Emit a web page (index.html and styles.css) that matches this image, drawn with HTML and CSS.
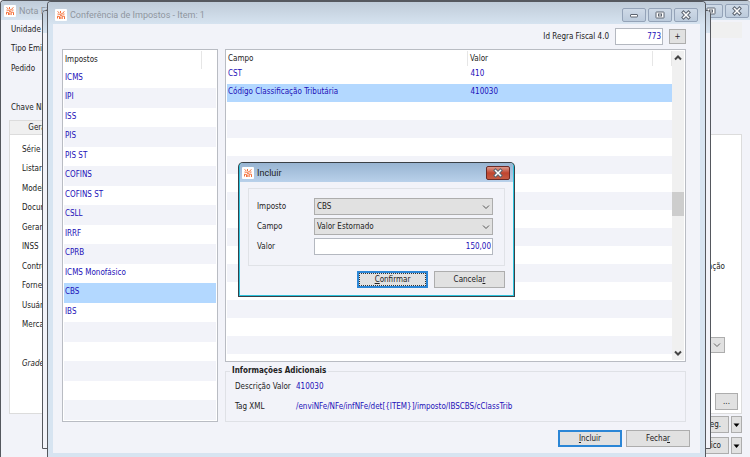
FILE: index.html
```
<!DOCTYPE html>
<html lang="pt-BR">
<head>
    <meta charset="UTF-8">
    <title>Conferência de Impostos</title>
    <link rel="stylesheet" href="styles.css">
</head>
<body>
    <!-- shared icons -->
    <svg class="sprite" width="0" height="0">
        <symbol id="logo" viewBox="0 0 12 12">
            <rect width="12" height="12" rx="1" fill="#fff"/>
            <path d="M2.5 2.5l2 1.5M5.5 2v2M9.5 2.5l-2 1.5M2.5 5l2 .3M7.5 5.2l2-.2M2.5 9.5V7.2l2 .3V10M4.5 5.5l3-1M5.8 10V7.5M7.2 10V7l2.3.3V10M5 6.3h2" fill="none" stroke="#f4703a" stroke-width="1"/>
        </symbol>
        <symbol id="min" viewBox="0 0 10 10">
            <rect x="1.5" y="4.5" width="7" height="2.5" rx=".5" fill="#fff" stroke="#5c6470"/>
        </symbol>
        <symbol id="max" viewBox="0 0 10 10">
            <rect x="1" y="2" width="8" height="6" rx=".5" fill="#fff" stroke="#5c6470"/>
            <rect x="3.5" y="4" width="3" height="2" fill="#fff" stroke="#5c6470"/>
        </symbol>
        <symbol id="close" viewBox="0 0 10 10">
            <path d="M2.5 2.5l5 5M7.5 2.5l-5 5" stroke="#5c6470" stroke-width="3.4" stroke-linecap="square"/>
            <path d="M2.5 2.5l5 5M7.5 2.5l-5 5" stroke="#fff" stroke-width="1.5" stroke-linecap="square"/>
        </symbol>
        <symbol id="chevron" viewBox="0 0 8 8">
            <path d="M1 2.5l3 3 3-3" fill="none" stroke="currentColor"/>
        </symbol>
        <symbol id="caret" viewBox="0 0 8 8">
            <path d="M1 2.5h6L4 6z" fill="currentColor"/>
        </symbol>
    </svg>

    <!-- invoice window -->
    <div class="window nota">
        <div class="titlebar">
            <svg class="logo"><use href="#logo"/></svg>
            <span class="title">Nota Fiscal</span>
            <div class="controls">
                <button class="ctl" aria-label="Restaurar"><svg><use href="#max"/></svg></button>
                <button class="ctl" aria-label="Fechar"><svg><use href="#close"/></svg></button>
            </div>
        </div>
        <div class="nota-body">
            <div class="rows head-rows">
                <div>Unidade <span class="toolbar"></span></div>
                <div>Tipo Emissão</div>
                <div>Pedido</div>
                <div></div>
                <div>Chave NFe</div>
            </div>
            <button class="tab">Geral</button>
            <div class="rows tab-panel">
                <div>Série</div>
                <div>Listar</div>
                <div>Modelo</div>
                <div>Documento</div>
                <div>Gerar</div>
                <div>INSS</div>
                <div>Controle <span class="end">Operação</span></div>
                <div>Fornecedor</div>
                <div>Usuário</div>
                <div>Mercadoria</div>
                <div><button class="btn drop end" aria-label="Abrir lista"><svg><use href="#chevron"/></svg></button></div>
                <div><i>Grade</i></div>
                <div></div>
                <div class="more-row"><button class="btn more">...</button></div>
            </div>
            <div class="nota-actions">
                <button class="btn wide">Ne<u>g</u>.</button>
                <button class="btn split" aria-label="Mais opções"><svg><use href="#caret"/></svg></button>
            </div>
            <div class="nota-actions">
                <button class="btn wide">Histórico</button>
                <button class="btn split" aria-label="Mais opções"><svg><use href="#caret"/></svg></button>
            </div>
        </div>
    </div>

    <!-- item window -->
    <div class="window item">
        <div class="titlebar"></div>
    </div>

    <!-- taxes window -->
    <div class="window conferencia">
        <div class="titlebar">
            <svg class="logo"><use href="#logo"/></svg>
            <span class="title">Conferência de Impostos - Item: 1</span>
            <div class="controls">
                <button class="ctl" aria-label="Minimizar"><svg><use href="#min"/></svg></button>
                <button class="ctl" aria-label="Maximizar"><svg><use href="#max"/></svg></button>
                <button class="ctl" aria-label="Fechar"><svg><use href="#close"/></svg></button>
            </div>
        </div>
        <div class="content">
            <div class="regra">
                <label for="regra">Id Regra Fiscal 4.0</label>
                <input id="regra" class="field" type="text" value="773">
                <button class="btn plus">+</button>
            </div>
            <div class="panes">
                <div class="grid impostos">
                    <table>
                        <thead><tr><th>Impostos</th><th class="stub"></th></tr></thead>
                        <tbody>
                            <tr><td colspan="2">ICMS</td></tr>
                            <tr><td colspan="2">IPI</td></tr>
                            <tr><td colspan="2">ISS</td></tr>
                            <tr><td colspan="2">PIS</td></tr>
                            <tr><td colspan="2">PIS ST</td></tr>
                            <tr><td colspan="2">COFINS</td></tr>
                            <tr><td colspan="2">COFINS ST</td></tr>
                            <tr><td colspan="2">CSLL</td></tr>
                            <tr><td colspan="2">IRRF</td></tr>
                            <tr><td colspan="2">CPRB</td></tr>
                            <tr><td colspan="2">ICMS Monofásico</td></tr>
                            <tr class="selected"><td colspan="2">CBS</td></tr>
                            <tr><td colspan="2">IBS</td></tr>
                            <tr><td colspan="2"></td></tr>
                            <tr><td colspan="2"></td></tr>
                            <tr><td colspan="2"></td></tr>
                            <tr><td colspan="2"></td></tr>
                            <tr><td colspan="2"></td></tr>
                        </tbody>
                    </table>
                </div>
                <div class="details">
                    <div class="grid campos">
                        <table>
                            <thead><tr><th>Campo</th><th class="valor">Valor</th><th class="stub"></th></tr></thead>
                            <tbody>
                                <tr><td>CST</td><td colspan="2">410</td></tr>
                                <tr class="selected"><td>Código Classificação Tributária</td><td colspan="2">410030</td></tr>
                                <tr><td colspan="3"></td></tr>
                                <tr><td colspan="3"></td></tr>
                                <tr><td colspan="3"></td></tr>
                                <tr><td colspan="3"></td></tr>
                                <tr><td colspan="3"></td></tr>
                                <tr><td colspan="3"></td></tr>
                                <tr><td colspan="3"></td></tr>
                                <tr><td colspan="3"></td></tr>
                                <tr><td colspan="3"></td></tr>
                                <tr><td colspan="3"></td></tr>
                                <tr><td colspan="3"></td></tr>
                                <tr><td colspan="3"></td></tr>
                                <tr><td colspan="3"></td></tr>
                                <tr><td colspan="3"></td></tr>
                            </tbody>
                        </table>
                        <div class="scrollbar">
                            <svg class="up"><use href="#chevron"/></svg>
                            <div class="track"><div class="thumb"></div></div>
                            <svg><use href="#chevron"/></svg>
                        </div>
                    </div>
                    <fieldset class="info">
                        <legend>Informações Adicionais</legend>
                        <dl>
                            <dt>Descrição Valor</dt><dd>410030</dd>
                            <dt>Tag XML</dt><dd>/enviNFe/NFe/infNFe/det[{ITEM}]/imposto/IBSCBS/cClassTrib</dd>
                        </dl>
                    </fieldset>
                </div>
            </div>
            <div class="actions">
                <button class="btn primary"><u>I</u>ncluir</button>
                <button class="btn">Fecha<u>r</u></button>
            </div>
        </div>
    </div>

    <!-- include dialog -->
    <div class="window dialog">
        <div class="titlebar">
            <svg class="logo"><use href="#logo"/></svg>
            <span class="title">Incluir</span>
            <div class="controls">
                <button class="ctl red" aria-label="Fechar"><svg><use href="#close"/></svg></button>
            </div>
        </div>
        <form class="dialog-body">
            <div class="form">
                <label for="imposto">Imposto</label>
                <div class="select">
                    <select id="imposto"><option>CBS</option></select>
                    <svg><use href="#chevron"/></svg>
                </div>
                <label for="campo">Campo</label>
                <div class="select">
                    <select id="campo"><option>Valor Estornado</option></select>
                    <svg><use href="#chevron"/></svg>
                </div>
                <label for="valor">Valor</label>
                <input id="valor" class="field" type="text" value="150,00">
            </div>
            <div class="actions">
                <button type="button" class="btn primary focus"><u>C</u>onfirmar</button>
                <button type="button" class="btn">Cancela<u>r</u></button>
            </div>
        </form>
    </div>
</body>
</html>
```

FILE: styles.css
```
* {
    box-sizing: border-box;
}
body {
    margin: 0;
    height: 100vh;
    position: relative;
    overflow: hidden;
    background: #f2f3f9;
    color: #222;
    font-family: "DejaVu Sans Condensed", "DejaVu Sans", sans-serif;
    font-stretch: condensed;
    font-size: 8px;
    line-height: 12px;
}
button, input, select {
    font: inherit;
    color: inherit;
    margin: 0;
    padding: 0;
}
.sprite {
    position: absolute;
}

/* windows */
.window {
    position: absolute;
    display: flex;
    flex-direction: column;
    background: #f2f3f9;
    border: 1px solid #55585e;
    border-radius: 4px 4px 0 0;
}
.titlebar {
    flex: none;
    display: flex;
    align-items: center;
    gap: 3px;
    height: 22px;
    padding: 0 2px 0 6px;
    background: linear-gradient(#bfcbd8, #d6e3f0);
    border-radius: 3px 3px 0 0;
    color: #8f969f;
    font-family: Roboto, "Open Sans", sans-serif;
    font-stretch: normal;
    font-size: 9px;
}
.logo {
    width: 12px;
    height: 12px;
}
.controls {
    display: flex;
    gap: 2px;
    margin-left: auto;
}
.ctl {
    width: 24px;
    height: 14px;
    display: flex;
    align-items: center;
    justify-content: center;
    background: linear-gradient(#cfdae7, #bccbdc);
    border: 1px solid #94a3b8;
    border-radius: 2px;
}
.ctl svg {
    width: 10px;
    height: 10px;
}
.red {
    background: linear-gradient(#dc9a8e, #c0452f 50%, #c65a42);
    border-color: #6b2a26;
}

/* buttons and fields */
.btn {
    width: 64px;
    height: 17px;
    background: #e1e1e1;
    border: 1px solid #adadad;
}
.btn svg {
    width: 8px;
    height: 8px;
    display: block;
    margin: auto;
}
.primary {
    border: 2px solid #2b86d6;
}
.focus {
    outline: 1px dotted #333;
    outline-offset: -3px;
}
.field {
    height: 17px;
    padding: 0 1px;
    background: #fff;
    border: 1px solid #b4b8c0;
    color: #1c10b8;
    text-align: right;
    min-width: 0;
}
.actions {
    display: flex;
    justify-content: flex-end;
    gap: 4px;
}

/* invoice window */
.nota {
    inset: 0 0 -4px 0;
    border-right: 0;
}
.nota .titlebar {
    height: 19px;
    padding: 0 1px 0 3px;
}
.nota-body {
    padding: 0 8px;
}
.rows > div {
    height: 19px;
    display: flex;
    align-items: center;
}
.rows > div:nth-child(even) {
    height: 20px;
}
.head-rows {
    padding: 0 0 0 2px;
}
.toolbar {
    width: 120px;
    height: 16px;
    margin-left: auto;
    background: #f0f0f0;
}
.tab {
    display: block;
    width: 58px;
    height: 14px;
    margin-top: 3px;
    background: #f0f0f0;
    border: 1px solid #dcdcdc;
    border-bottom: 0;
    text-align: center;
}
.tab-panel {
    padding: 5px 3px 0 12px;
    height: 280px;
    background: #fff;
    border: 1px solid #dcdcdc;
}
.end {
    margin-left: auto;
    margin-right: 13px;
}
.drop {
    width: 17px;
    height: 16px;
    color: #666;
}
.rows .more-row {
    align-items: flex-start;
}
.more {
    width: 23px;
    margin-left: auto;
}
.nota-actions {
    display: flex;
    justify-content: flex-end;
    gap: 2px;
    padding-top: 2px;
    margin-bottom: 2px;
}
.nota-actions .wide {
    width: 80px;
    padding-right: 7px;
    text-align: right;
}
.nota-actions .split {
    width: 11px;
    color: #000;
}
.nota-actions .split svg {
    width: 9px;
}

/* item window */
.item {
    inset: 10px 39px 8px 42px;
}

/* taxes window */
.conferencia {
    inset: 1px 44px 0 47px;
    padding: 0 5px 5px;
    background: #d7e4f1;
    border-bottom: 0;
}
.conferencia .titlebar {
    margin: 0 -5px;
    padding: 4px 7px 0;
}
.content {
    flex: 1;
    display: flex;
    flex-direction: column;
    padding: 4px 10px 6px 9px;
    background: #f2f3f9;
}
.regra {
    display: flex;
    align-items: center;
    justify-content: flex-end;
    gap: 6px;
    padding-right: 4px;
    margin-bottom: 4px;
}
.regra .field {
    width: 48px;
}
.regra .plus {
    height: 15px;
    width: 17px;
    line-height: 10px;
}
.panes {
    flex: 1;
    display: flex;
    gap: 7px;
    padding-right: 4px;
}
.grid {
    display: flex;
    padding: 1px;
    background: #fff;
    border: 1px solid #b9bcc3;
}
.grid table {
    flex: 1;
    align-self: flex-start;
    border-collapse: collapse;
    table-layout: fixed;
}
.grid th {
    padding: 0 1px;
    font-weight: normal;
    text-align: left;
}
.grid td {
    padding: 0 1px 2px;
    color: #1c10b8;
}
.grid tbody tr:nth-child(even) {
    background: #f2f3f9;
}
.grid tbody tr.selected {
    background: #b3d8ff;
}
.grid .stub {
    border-left: 1px solid #e6e6e6;
}
.impostos {
    flex: 0 0 25%;
}
.impostos tr {
    height: 19px;
}
.impostos thead tr {
    height: 18px;
}
.impostos tbody tr:nth-child(even) {
    height: 20px;
}
.impostos .stub {
    width: 15px;
}
.details {
    flex: 1;
    display: flex;
    flex-direction: column;
    gap: 3px;
}
.campos {
    flex: 1;
}
.campos thead tr {
    height: 15px;
}
.campos tbody tr {
    height: 18px;
}
.campos .valor {
    width: 185px;
    padding-left: 2px;
    border-left: 1px solid #e6e6e6;
}
.campos td + td {
    padding-left: 3px;
}
.campos .stub {
    width: 19px;
    border-right: 1px solid #e6e6e6;
}
.scrollbar {
    width: 12px;
    display: flex;
    flex-direction: column;
    align-items: center;
    padding: 3px 0;
    background: #f0f0f0;
}
.scrollbar svg {
    width: 8px;
    height: 8px;
    color: #444;
    stroke-width: 2;
}
.scrollbar .up {
    transform: rotate(180deg);
}
.track {
    flex: 1;
    width: 100%;
    padding-top: 130px;
}
.thumb {
    height: 24px;
    background: #cdcdcd;
}
.info {
    margin: 0;
    padding: 0 9px 4px;
    border: 1px solid #dfe1e6;
}
.info legend {
    margin-left: -5px;
    padding: 0 2px;
    font-weight: bold;
}
.info dl {
    display: grid;
    grid-template-columns: 61px 1fr;
    margin: 0;
    line-height: 20px;
}
.info dd {
    margin: 0;
    color: #1c10b8;
}
.content > .actions {
    margin-top: 8px;
}

/* include dialog */
.dialog {
    left: 239px;
    top: 163px;
    width: 275px;
    border: 1px solid #2cc3dd;
    border-top: 0;
    box-shadow: 0 0 0 1px #3a4046;
}
.dialog .titlebar {
    height: 19px;
    padding: 0 3px 0 2px;
    background: linear-gradient(#98b4d2, #b9d1ea);
    color: #222;
}
.dialog-body {
    padding: 6px 8px 7px;
}
.form {
    display: grid;
    grid-template-columns: 57px 1fr;
    row-gap: 3px;
    align-items: center;
    padding: 9px 11px 10px 8px;
    border: 1px solid #e0e2e7;
}
.select {
    display: grid;
    align-items: center;
}
.select select, .select svg {
    grid-area: 1 / 1;
}
.select select {
    appearance: none;
    width: 100%;
    height: 17px;
    padding: 0 2px;
    background: #e1e1e1;
    border: 1px solid #adadad;
    border-radius: 0;
}
.select svg {
    width: 8px;
    height: 8px;
    margin-right: 3px;
    justify-self: end;
    color: #555;
    pointer-events: none;
}
.dialog .actions {
    margin-top: 5px;
    gap: 6px;
}
.dialog .actions .btn {
    width: 71px;
}
```
